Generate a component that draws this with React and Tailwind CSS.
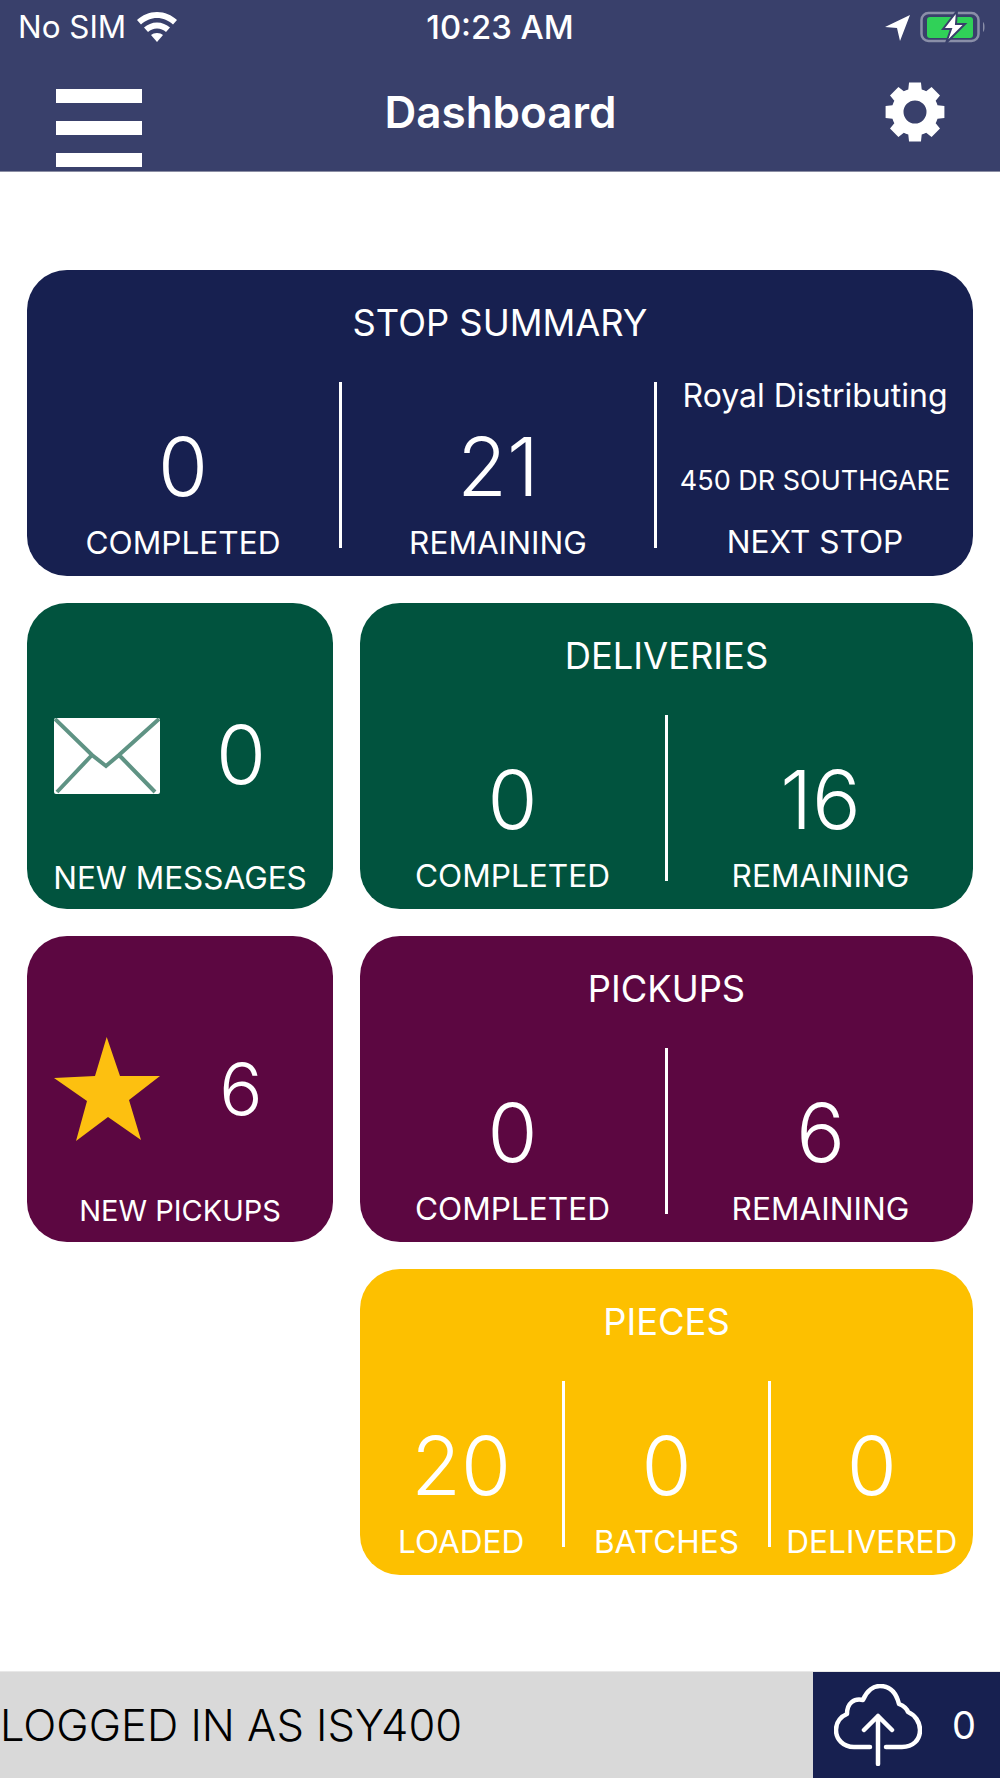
import React from "react";

const font = { fontFamily: "Inter, 'Noto Sans', sans-serif" };

function gearPath() {
  const cx = 30, cy = 30, teeth = 8, ro = 30, ri = 23.5;
  let d = "";
  for (let i = 0; i < teeth; i++) {
    const a = (i * 2 * Math.PI) / teeth - Math.PI / 2;
    const pts = [
      [ri, a - 0.39],
      [ri, a - 0.29],
      [ro, a - 0.2],
      [ro, a + 0.2],
      [ri, a + 0.29],
    ];
    pts.forEach(([r, t], j) => {
      const x = (cx + r * Math.cos(t)).toFixed(2);
      const y = (cy + r * Math.sin(t)).toFixed(2);
      d += (i === 0 && j === 0 ? "M" : "L") + x + " " + y + " ";
    });
  }
  d += "Z M30 18.5 A11.5 11.5 0 1 0 30 41.5 A11.5 11.5 0 1 0 30 18.5 Z";
  return d;
}

function Stat({ value, label }) {
  return (
    <div className="flex-1 min-w-0 flex flex-col items-center justify-end">
      <div className="text-[81px] leading-[90px] font-[350] text-white">{value}</div>
      <div className="text-[31.6px] leading-[36px] mt-[13px] text-white whitespace-nowrap">{label}</div>
    </div>
  );
}

function Divider() {
  return <div className="w-[3px] h-[166px] bg-white shrink-0 self-start" />;
}

function Card({ title, color, children }) {
  return (
    <div className={`h-[306px] rounded-[40px] ${color} flex flex-col`}>
      <div className="h-[112px] pt-[34px] text-center text-[36.3px] leading-[38px] text-white">{title}</div>
      <div className="flex items-stretch h-[179px]">{children}</div>
    </div>
  );
}

function MiniCard({ color, icon, value, label, valueClass, labelClass }) {
  return (
    <div className={`h-[306px] rounded-[40px] ${color} flex flex-col`}>
      <div className="flex items-center h-[240px] pl-[26px] pt-[66px]">
        <div className="w-[108px] shrink-0 flex justify-center">{icon}</div>
        <div className={`flex-1 text-center font-[350] text-white pr-[12px] ${valueClass}`}>{value}</div>
      </div>
      <div className={`text-center text-white whitespace-nowrap ${labelClass}`}>{label}</div>
    </div>
  );
}

function Mail() {
  return (
    <svg width="106" height="76" viewBox="0 0 106 76" className="blur-[0.7px]">
      <rect width="106" height="76" rx="2" fill="#fff" />
      <path d="M1 1 L38 37 L52 48 L65 37 L105 1 M3 74 L38 37 M101 74 L65 37" fill="none" stroke="#5f9384" strokeWidth="4" />
    </svg>
  );
}

function Star() {
  return (
    <svg width="106" height="106" viewBox="0 0 106 106" className="mt-[1px]">
      <path d="M52.700 0 L66 39 L106 39 L75 63 L87 103 L54 80 L22 104 L33 64 L0 41 L41 39 Z" fill="#fdc010" />
    </svg>
  );
}

export default function App() {
  return (
    <div className="w-[1000px] h-[1778px] bg-white flex flex-col overflow-hidden" style={font}>
      <header className="h-[172px] bg-[#39406b] border-b border-[#8a8da3] shrink-0 flex flex-col text-white">
        <div className="h-[55px] flex items-center pl-[18px] pr-[15px]">
          <div className="w-[330px] flex items-center gap-[11px] text-[31.4px]">
            <span>No SIM</span>
            <svg width="40" height="30" viewBox="0 0 40 30" fill="#fff" className="-mt-[1px]">
              <path d="M20 0 C28 0 34.5 3 40 8 L36 12.5 C31.5 8.5 26 6 20 6 C14 6 8.5 8.500 4 12.5 L0 8 C5.500 3 12 0 20 0 Z" />
              <path d="M20 10.500 C25 10.500 29.500 12.500 33 15.500 L29 20 C26.500 17.800 23.500 16.500 20 16.500 C16.500 16.500 13.500 17.800 11 20 L7 15.500 C10.500 12.500 15 10.500 20 10.500 Z" />
              <path d="M20 21 C22.500 21 24.500 21.800 26 23 L20 30 L14 23 C15.500 21.800 17.500 21 20 21 Z" />
            </svg>
          </div>
          <div className="flex-1 text-center font-medium text-[32.800px] pr-[3px]">10:23 AM</div>
          <div className="w-[330px] flex items-center justify-end gap-[9px]">
            <svg width="25" height="26" viewBox="0 0 25 26" fill="#fff">
              <path d="M25 0 L15 26 L12 13 L0 12 Z" />
            </svg>
            <svg width="66" height="32" viewBox="0 0 66 32" className="-mt-[2px]">
              <rect x="2.500" y="2" width="57" height="28" rx="7" fill="none" stroke="#8a8fa8" strokeWidth="2.500" />
              <rect x="8" y="6" width="46" height="21" rx="3" fill="#30d158" />
              <path d="M64 11 C66 12 66 20 64 21 Z" fill="#8a8fa8" />
              <path d="M38 0 L24 18 L32 18 L27 32 L46 13 L37 13 Z" fill="#fff" stroke="#39406b" strokeWidth="2" />
            </svg>
          </div>
        </div>
        <div className="flex-1 flex items-start pl-[56px] pr-[55px]">
          <div className="w-[86px] flex flex-col gap-[18px] pt-[34px]">
            <div className="h-[14px] bg-white" />
            <div className="h-[14px] bg-white" />
            <div className="h-[14px] bg-white" />
          </div>
          <div className="flex-1 text-center text-[44px] leading-[54px] font-semibold pt-[30px]">Dashboard</div>
          <div className="w-[86px] flex justify-end pt-[27px]">
            <svg width="60" height="60" viewBox="0 0 60 60" className="blur-[0.6px]">
              <path d={gearPath()} fill="#fff" fillRule="evenodd" />
            </svg>
          </div>
        </div>
      </header>

      <main className="flex-1 pt-[98px] px-[27px] grid grid-cols-[306px_613px] gap-[27px] content-start">
        <div className="col-span-2">
          <Card title="STOP SUMMARY" color="bg-[#172050]">
            <Stat value="0" label="COMPLETED" />
            <Divider />
            <Stat value="21" label="REMAINING" />
            <Divider />
            <div className="w-[316px] shrink-0 flex flex-col items-center text-white">
              <div className="text-[32px] leading-[36px] h-[87px] -mt-[4px] whitespace-nowrap">Royal Distributing</div>
              <div className="text-[27px] leading-[32px] h-[59px] whitespace-nowrap">450 DR SOUTHGARE</div>
              <div className="text-[31.6px] leading-[36px] whitespace-nowrap">NEXT STOP</div>
            </div>
          </Card>
        </div>

        <MiniCard
          color="bg-[#01533e]"
          icon={<Mail />}
          value="0"
          valueClass="text-[81px] leading-[90px] -mt-[2px]"
          label="NEW MESSAGES"
          labelClass="text-[31.5px] leading-[36px] mt-[17px]"
        />
        <Card title="DELIVERIES" color="bg-[#01533e]">
          <Stat value="0" label="COMPLETED" />
          <Divider />
          <Stat value="16" label="REMAINING" />
        </Card>

        <MiniCard
          color="bg-[#5c0741]"
          icon={<Star />}
          value="6"
          valueClass="text-[72px] leading-[90px]"
          label="NEW PICKUPS"
          labelClass="text-[29px] leading-[34px] mt-[18px]"
        />
        <Card title="PICKUPS" color="bg-[#5c0741]">
          <Stat value="0" label="COMPLETED" />
          <Divider />
          <Stat value="6" label="REMAINING" />
        </Card>

        <div />
        <Card title="PIECES" color="bg-[#fdc000]">
          <Stat value="20" label="LOADED" />
          <Divider />
          <Stat value="0" label="BATCHES" />
          <Divider />
          <Stat value="0" label="DELIVERED" />
        </Card>
      </main>

      <footer className="h-[107px] shrink-0 flex border-t border-[#e8e8e8]">
        <div className="flex-1 bg-[#d9d9d9] flex items-center pt-[1px] text-[43.5px] font-[350] text-black">
          LOGGED IN AS ISY400
        </div>
        <div className="w-[187px] bg-[#172050] flex items-center pl-[21px] text-white">
          <svg width="88" height="82" viewBox="0 0 88 82" fill="none" stroke="#fff" strokeWidth="4.500" strokeLinecap="round" strokeLinejoin="round" className="blur-[0.4px]">
            <path d="M36 63 H20 C9 63 2 55 2 46 C2 37 8 32 13 30 C13 19 20 14 29 16 C33 6 40 2 46 2 C55 2 62 8 65 20 C70 22 73 25 74 28 C81 31 86 38 86 46 C86 56 79 63 68 63 H52" />
            <path d="M44 80 V32 M30 46 L44 32 L58 46" />
          </svg>
          <span className="ml-[30px] text-[38px]">0</span>
        </div>
      </footer>
    </div>
  );
}
